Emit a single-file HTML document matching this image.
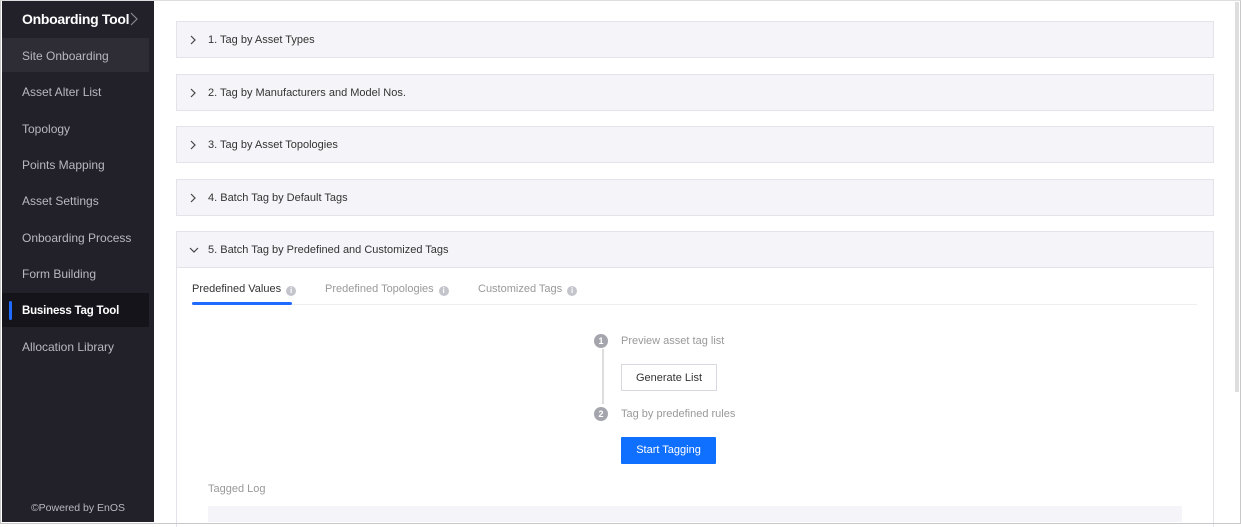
<!DOCTYPE html>
<html><head><style>
*{box-sizing:border-box;margin:0;padding:0}
body{width:1241px;height:524px;overflow:hidden;font-family:"Liberation Sans",sans-serif;background:#fff;position:relative}
.frame{position:absolute;left:0;top:0;width:1241px;height:524px;border:1px solid #c8c8c8;border-top-color:#ddd}
.side{position:absolute;left:2px;top:1px;width:152px;height:521px;background:#22212a;font-family:"Liberation Sans",sans-serif}
.side .t{position:absolute;left:20px;top:10px;color:#fff;font-size:14px;font-weight:bold;letter-spacing:-0.3px}
.side .t svg{position:absolute;left:108px;top:1px}
.item{position:absolute;left:0;width:147px;height:34px;line-height:36px;padding-left:20px;color:#b9b8c0;font-size:12px}
.item.a{background:#2e2d36}
.item.s{background:#15141a;color:#fff;font-weight:bold;font-size:11.5px;letter-spacing:-0.2px}
.item.s:before{content:"";position:absolute;left:7px;top:8px;width:3px;height:19px;background:#1f6bff;border-radius:2px}
.pw{position:absolute;left:0;width:152px;top:501px;text-align:center;color:#b9b8c0;font-size:10.5px}
.p{position:absolute;left:176px;width:1038px;height:37px;background:#f5f5f9;border:1px solid #e3e3ea;font-size:11px;color:#333;line-height:36px;padding-left:31px}
.p svg{position:absolute;left:13px;top:13px}
.body{position:absolute;left:176px;top:267px;width:1038px;height:260px;border-left:1px solid #e3e3ea;border-right:1px solid #e3e3ea}
.tab{position:absolute;top:283px;font-size:11px;color:#999}
.dot{display:inline-block;width:10px;height:10px;border-radius:50%;background:#c4c4cc;margin-left:5px;vertical-align:-1px;color:#fff;font-size:8px;line-height:10px;text-align:center;font-weight:bold}
.c{position:absolute;left:594px;width:14px;height:14px;border-radius:50%;background:#a5a5ad;color:#fff;font-size:9px;text-align:center;line-height:14px;font-weight:bold}
.st{position:absolute;left:621px;font-size:11px;color:#999}
.btn{position:absolute;left:621px;width:96px;height:27px;font-size:11px;text-align:center;line-height:26px}
</style></head><body>
<div class="side">
<div class="t">Onboarding Tool<svg width="8" height="14" viewBox="0 0 8 14"><path d="M1 1l6 6-6 6" fill="none" stroke="#8a8990" stroke-width="1.2"/></svg></div>
<div class="item a" style="top:37px">Site Onboarding</div>
<div class="item" style="top:73px">Asset Alter List</div>
<div class="item" style="top:110px">Topology</div>
<div class="item" style="top:146px">Points Mapping</div>
<div class="item" style="top:182px">Asset Settings</div>
<div class="item" style="top:219px">Onboarding Process</div>
<div class="item" style="top:255px">Form Building</div>
<div class="item s" style="top:292px">Business Tag Tool</div>
<div class="item" style="top:328px">Allocation Library</div>
<div class="pw">©Powered by EnOS</div>
</div>
<div class="p" style="top:21px"><svg width="6" height="10"><path d="M1 1l4 4-4 4" fill="none" stroke="#444" stroke-width="1.2"/></svg>1. Tag by Asset Types</div>
<div class="p" style="top:74px"><svg width="6" height="10"><path d="M1 1l4 4-4 4" fill="none" stroke="#444" stroke-width="1.2"/></svg>2. Tag by Manufacturers and Model Nos.</div>
<div class="p" style="top:126px"><svg width="6" height="10"><path d="M1 1l4 4-4 4" fill="none" stroke="#444" stroke-width="1.2"/></svg>3. Tag by Asset Topologies</div>
<div class="p" style="top:179px"><svg width="6" height="10"><path d="M1 1l4 4-4 4" fill="none" stroke="#444" stroke-width="1.2"/></svg>4. Batch Tag by Default Tags</div>
<div class="p" style="top:231px"><svg width="10" height="6" style="left:12px;top:15px"><path d="M1 1l4 4 4-4" fill="none" stroke="#444" stroke-width="1.2"/></svg>5. Batch Tag by Predefined and Customized Tags</div>
<div class="body"></div>
<div class="tab" style="left:192px;color:#333">Predefined Values<span class="dot">i</span></div>
<div class="tab" style="left:325px">Predefined Topologies<span class="dot">i</span></div>
<div class="tab" style="left:478px">Customized Tags<span class="dot">i</span></div>
<div style="position:absolute;left:192px;top:304px;width:1005px;height:1px;background:#eee"></div>
<div style="position:absolute;left:192px;top:302px;width:100px;height:3px;background:#1f6bff;border-radius:2px"></div>
<div class="c" style="top:334px">1</div>
<div style="position:absolute;left:602px;top:349px;width:2px;height:55px;background:#ddd"></div>
<div class="c" style="top:407px">2</div>
<div class="st" style="top:335px">Preview asset tag list</div>
<div class="st" style="top:408px">Tag by predefined rules</div>
<div class="btn" style="top:364px;border:1px solid #d8d8de;color:#333;background:#fff">Generate List</div>
<div class="btn" style="top:437px;width:95px;background:#0f6fff;color:#fff;border-radius:1px">Start Tagging</div>
<div style="position:absolute;left:208px;top:483px;font-size:11px;color:#999">Tagged Log</div>
<div style="position:absolute;left:208px;top:506px;width:974px;height:16px;background:#f5f5f9"></div>
<div style="position:absolute;left:1235px;top:2px;width:4px;height:390px;background:#dedede"></div>
<div class="frame"></div>
</body></html>
